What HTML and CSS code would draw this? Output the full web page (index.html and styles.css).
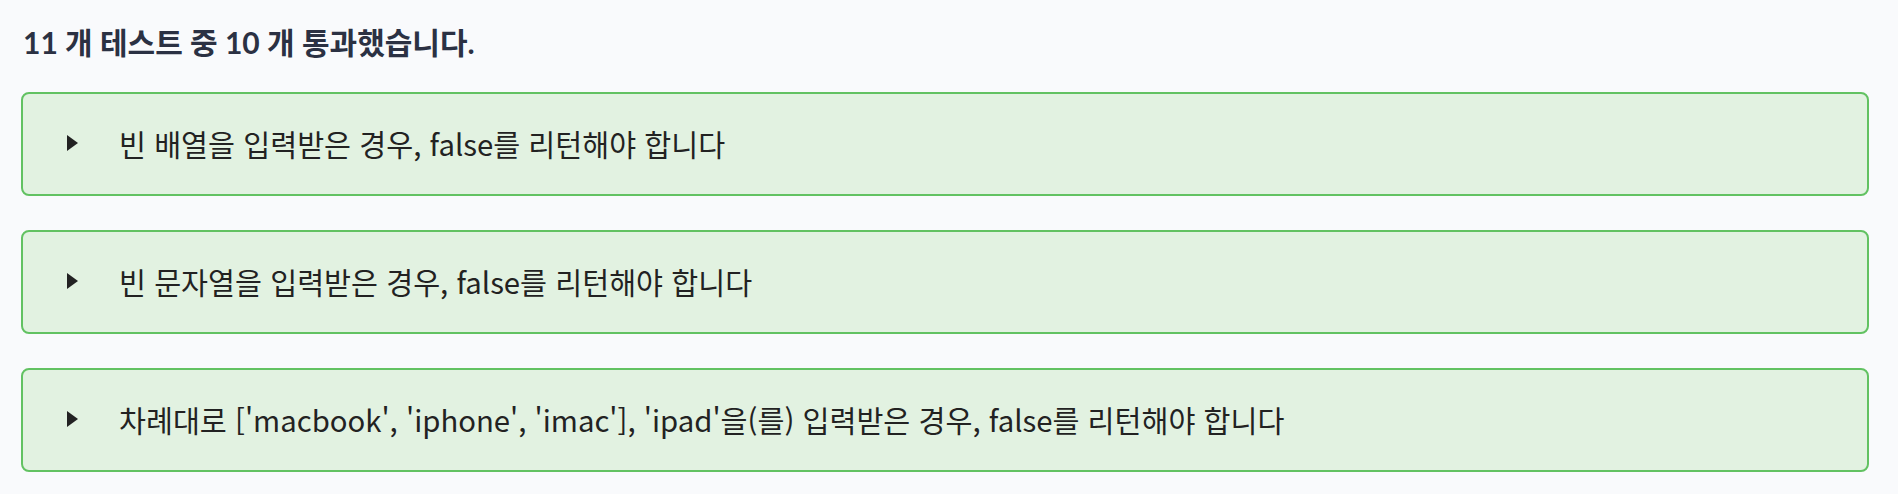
FILE: index.html
```html
<!DOCTYPE html>
<html lang="ko">
<head>
<meta charset="utf-8">
<title>테스트 결과</title>
<link rel="stylesheet" href="styles.css">
</head>
<body>
<main class="results">
  <h2 class="summary-title">11 개 테스트 중 10 개 통과했습니다.</h2>
  <ul class="tests">
    <li class="test pass"><span class="caret"></span><span class="test-name">빈 배열을 입력받은 경우, false를 리턴해야 합니다</span></li>
    <li class="test pass"><span class="caret"></span><span class="test-name">빈 문자열을 입력받은 경우, false를 리턴해야 합니다</span></li>
    <li class="test pass"><span class="caret"></span><span class="test-name">차례대로 ['macbook', 'iphone', 'imac'], 'ipad'을(를) 입력받은 경우, false를 리턴해야 합니다</span></li>
  </ul>
</main>
</body>
</html>
```
FILE: styles.css
```css
html, body {
  margin: 0;
  padding: 0;
  background: #f9fafc;
}
body {
  font-family: "Noto Sans CJK KR", "Noto Sans", sans-serif;
  color: #222;
}
.results {
  padding: 22px 29px 0 21px;
}
.summary-title {
  margin: 0 0 30px 2px;
  font-family: Lato, "Noto Sans CJK KR", sans-serif;
  font-weight: 700;
  font-size: 30px;
  line-height: 40px;
  color: #2b3143;
}
.tests {
  list-style: none;
  margin: 0;
  padding: 0;
  display: flex;
  flex-direction: column;
  gap: 34px;
}
.test {
  display: flex;
  align-items: center;
  height: 100px;
  border: 2px solid #62c262;
  border-radius: 8px;
  background: #e2f2e1;
  padding: 0 0 0 44px;
  box-sizing: content-box;
}
.caret {
  width: 0;
  height: 0;
  border-top: 8px solid transparent;
  border-bottom: 8px solid transparent;
  border-left: 11px solid #222;
  margin-right: 41px;
  margin-top: -2px;
}
.test-name {
  font-size: 29.3px;
  line-height: 40px;
  margin-top: -3px;
}
```
